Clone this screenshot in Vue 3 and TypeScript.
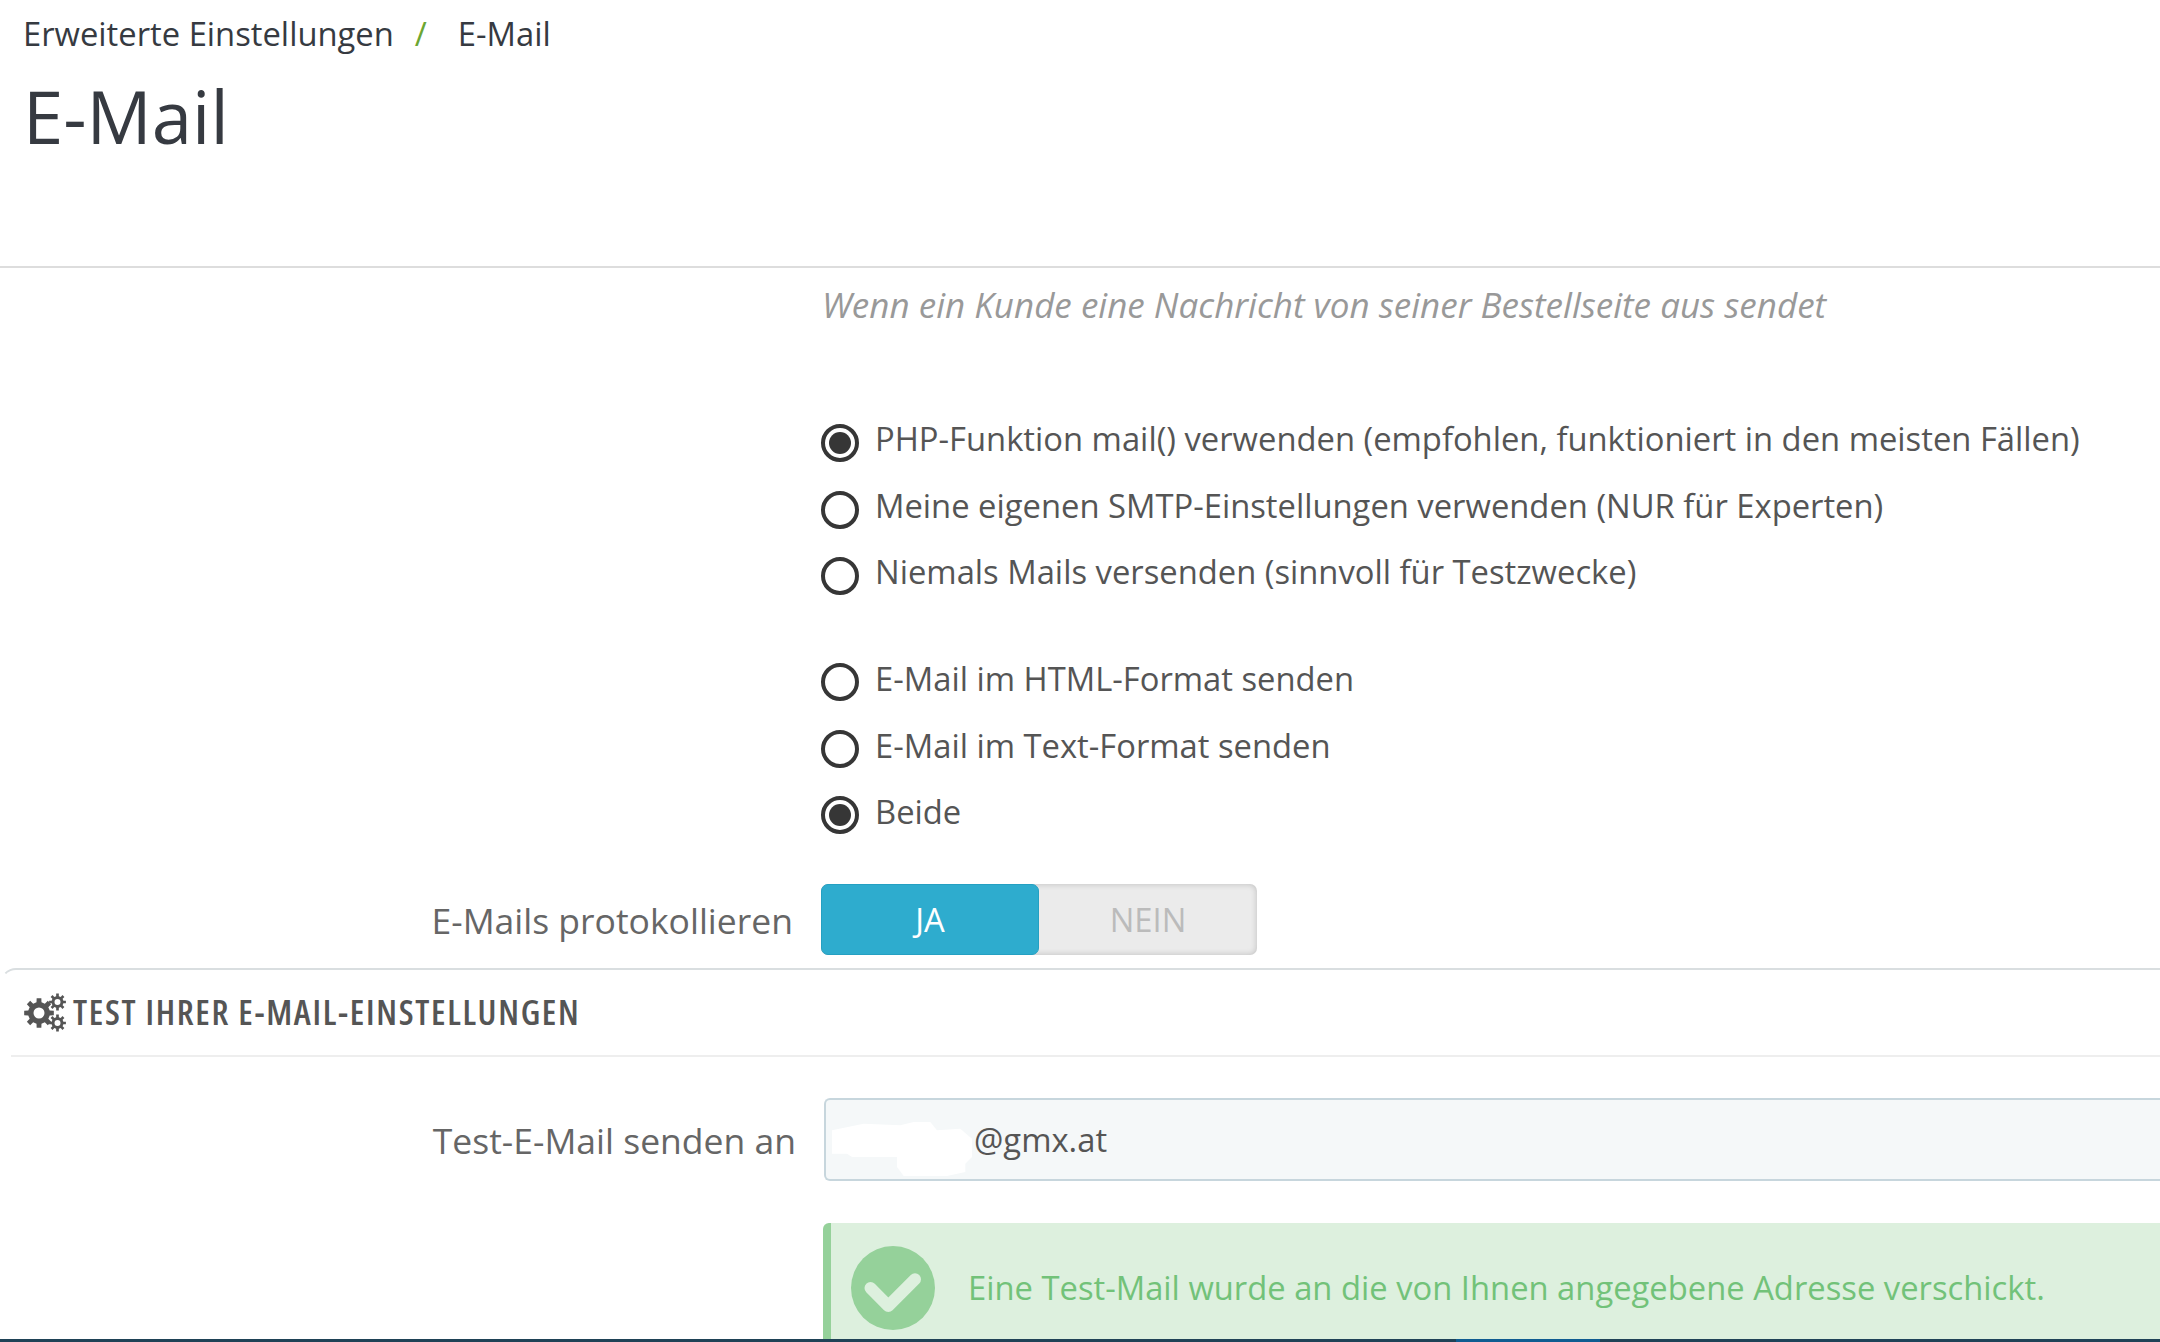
<script setup lang="ts">
function gear(cx: number, cy: number, ro: number, ri: number, hole: number, teeth: number): string {
  const pts: string[] = []
  const step = (Math.PI * 2) / teeth
  for (let i = 0; i < teeth; i++) {
    const a = i * step - Math.PI / 2
    const w = step * 0.2
    const p: [number, number][] = [
      [ri, a - w * 1.45],
      [ro, a - w],
      [ro, a + w],
      [ri, a + w * 1.45],
    ]
    for (const [r, t] of p) {
      pts.push(`${(cx + r * Math.cos(t)).toFixed(2)} ${(cy + r * Math.sin(t)).toFixed(2)}`)
    }
  }
  const ring = `M${cx - hole} ${cy}a${hole} ${hole} 0 1 0 ${hole * 2} 0a${hole} ${hole} 0 1 0 ${-hole * 2} 0Z`
  return `M${pts.join('L')}Z${ring}`
}

const gears = [gear(15, 20, 15, 11, 5.5, 8), gear(33.5, 9, 8.5, 6, 3, 8), gear(33.5, 30, 8.5, 6, 3, 8)]

const transportOptions = [
  { text: 'PHP-Funktion mail() verwenden (empfohlen, funktioniert in den meisten Fällen)', on: true },
  { text: 'Meine eigenen SMTP-Einstellungen verwenden (NUR für Experten)', on: false },
  { text: 'Niemals Mails versenden (sinnvoll für Testzwecke)', on: false },
]
const formatOptions = [
  { text: 'E-Mail im HTML-Format senden', on: false },
  { text: 'E-Mail im Text-Format senden', on: false },
  { text: 'Beide', on: true },
]
</script>

<template>
  <div class="page">
    <div class="main">
      <header class="head">
        <div class="crumbs">
          <span>Erweiterte Einstellungen</span>
          <span class="slash">/</span>
          <span>E-Mail</span>
        </div>
        <h1 class="title">E-Mail</h1>
      </header>

      <p class="hint">Wenn ein Kunde eine Nachricht von seiner Bestellseite aus sendet</p>

      <div class="radios first">
        <label v-for="o in transportOptions" :key="o.text" class="radio">
          <span class="dot" :class="{ on: o.on }"></span>
          <span>{{ o.text }}</span>
        </label>
      </div>

      <div class="radios second">
        <label v-for="o in formatOptions" :key="o.text" class="radio">
          <span class="dot" :class="{ on: o.on }"></span>
          <span>{{ o.text }}</span>
        </label>
      </div>

      <div class="field toggle-row">
        <span class="label toggle-label">E-Mails protokollieren</span>
        <div class="toggle">
          <span class="yes">JA</span>
          <span class="no">NEIN</span>
        </div>
      </div>

      <section class="panel">
        <div class="panel-head">
          <svg class="gears" width="42" height="40" viewBox="0 0 42 40">
            <path v-for="d in gears" :key="d" :d="d" fill="#555" fill-rule="evenodd" />
          </svg>
          <h2 class="panel-title">TEST IHRER E-MAIL-EINSTELLUNGEN</h2>
        </div>

        <div class="field mail-row">
          <span class="label mail-label">Test-E-Mail senden an</span>
          <div class="input">
            <svg class="blur" width="140" height="54" viewBox="155 125 420 162">
              <path
                d="M155 150L250 130L360 135L400 125L450 125L470 150L540 145L575 175L575 230L555 250L555 275L500 287L370 287L350 260L350 230L215 230L200 220L155 220Z"
                fill="#fff"
              />
            </svg>
            <span>@gmx.at</span>
          </div>
        </div>

        <div class="alert">
          <svg class="check" width="84" height="84" viewBox="0 0 84 84">
            <circle cx="42" cy="42" r="42" fill="#95d19a" />
            <path d="M19.5 42L37.3 60L64 33.3" fill="none" stroke="#ddf0de" stroke-width="12" stroke-linecap="round" stroke-linejoin="round" />
          </svg>
          <span class="alert-text">Eine Test-Mail wurde an die von Ihnen angegebene Adresse verschickt.</span>
        </div>
      </section>
    </div>
    <footer class="footer"><span class="footer-active"></span></footer>
  </div>
</template>

<style>
html,
body {
  margin: 0;
  background: #fff;
}
</style>

<style scoped>
.page {
  width: 2160px;
  height: 1342px;
  display: flex;
  flex-direction: column;
  overflow: hidden;
  background: #fff;
  font-family: 'Open Sans', sans-serif;
  font-size: 32.75px;
  color: #555;
}
.main {
  flex: 1;
  min-height: 0;
  overflow: hidden;
}
.head {
  height: 266px;
  border-bottom: 2px solid #ddd;
  padding-left: 23px;
}
.crumbs {
  display: flex;
  height: 66px;
  align-items: center;
  color: #363a41;
  font-size: 32.75px;
}
.slash {
  color: #6ca632;
  margin: 0 31px 0 21px;
}
.title {
  margin: 0;
  font-size: 72.5px;
  font-weight: 400;
  line-height: 100px;
  color: #363a41;
}
.hint {
  margin: 0 0 0 822px;
  height: 142px;
  padding-top: 15px;
  box-sizing: border-box;
  font-size: 35px;
  line-height: 44px;
  font-style: italic;
  color: #999;
}
.radios {
  margin-left: 821px;
}
.first {
  height: 239px;
}
.second {
  height: 199px;
}
.radio {
  height: 66.4px;
  display: flex;
  align-items: center;
  gap: 16px;
  line-height: 44px;
}
.radio > span:last-child {
  position: relative;
  top: -4px;
}
.second .radio > span:last-child {
  top: -3px;
}
.dot {
  box-sizing: border-box;
  width: 38px;
  height: 38px;
  flex: none;
  border: 4px solid #363636;
  border-radius: 50%;
  background: #fff;
  display: flex;
  align-items: center;
  justify-content: center;
}
.dot.on::after {
  content: '';
  width: 22px;
  height: 22px;
  border-radius: 50%;
  background: #363636;
}
.field {
  display: flex;
  align-items: center;
  gap: 28px;
}
.label {
  text-align: right;
  color: #666;
  font-size: 35.5px;
}
.toggle-row {
  margin-top: 36px;
}
.toggle-label {
  width: 793px;
  flex: none;
}
.toggle {
  width: 436px;
  height: 71px;
  display: flex;
  border-radius: 7px;
  background: #ebebeb;
  box-shadow: inset 0 0 6px rgba(0, 0, 0, 0.2);
}
.toggle span {
  display: flex;
  align-items: center;
  justify-content: center;
  box-sizing: border-box;
}
.yes {
  width: 218px;
  background: #2eacce;
  border: 1px solid #25a0c2;
  border-radius: 7px;
  color: #fff;
}
.no {
  flex: 1;
  color: #bbb;
}
.panel {
  margin-top: 13px;
  border-top: 2px solid #d9dee0;
  border-left: 2px solid transparent;
  border-radius: 16px 0 0 0;
}
.panel-head {
  margin-left: 9px;
  height: 85px;
  border-bottom: 2px solid #eee;
  display: flex;
  align-items: center;
  gap: 7px;
  padding-left: 13px;
}
.gears {
  flex: none;
}
.panel-title {
  margin: 0;
  position: relative;
  top: -1px;
  font-size: 35px;
  font-weight: 600;
  color: #555;
  font-stretch: 75%;
  letter-spacing: 1.7px;
  white-space: nowrap;
}
.mail-row {
  margin-top: 41px;
}
.mail-label {
  width: 794px;
  flex: none;
  padding-top: 1px;
}
.input {
  flex: 1;
  height: 83px;
  box-sizing: border-box;
  display: flex;
  align-items: center;
  border: 2px solid #c7d6dd;
  border-right: none;
  border-radius: 6px 0 0 6px;
  background: #f5f8f9;
  color: #555;
  padding-left: 6px;
  gap: 2px;
}
.blur {
  flex: none;
  margin-top: 18px;
}
.alert {
  margin: 42px 0 0 821px;
  height: 130px;
  box-sizing: border-box;
  display: flex;
  align-items: center;
  gap: 33px;
  padding-left: 20px;
  background: #ddf0de;
  border-left: 8px solid #95d19a;
  border-radius: 6px 0 0 0;
  color: #72c279;
}
.alert-text {
  position: relative;
  top: -1px;
}
.check {
  flex: none;
}
.footer {
  height: 3px;
  flex: none;
  background: #1f4256;
  padding-left: 1456px;
}
.footer-active {
  display: block;
  width: 144px;
  height: 3px;
  background: #0f5c91;
}
</style>
